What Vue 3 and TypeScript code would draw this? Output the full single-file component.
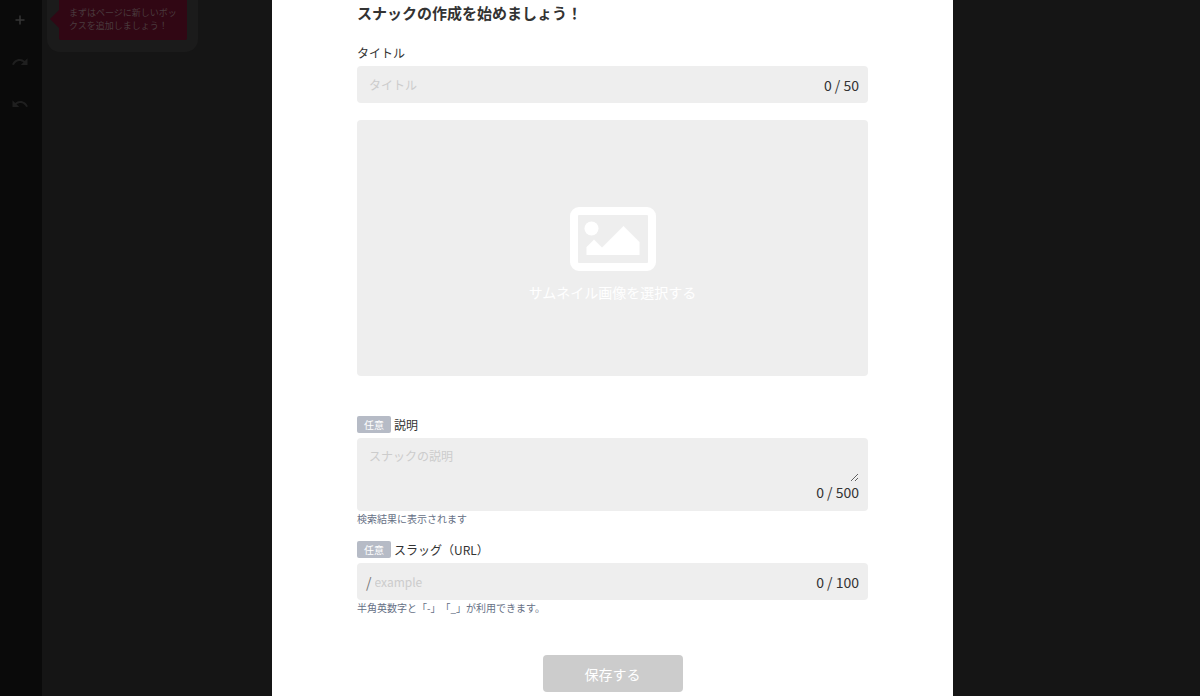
<script setup lang="ts">
import { ref } from 'vue'

const title = ref('')
const description = ref('')
const slug = ref('')
</script>

<template>
  <div class="app">
    <div class="editor">
      <nav class="toolbar">
        <button type="button" class="tool add" aria-label="追加">
          <svg viewBox="0 0 24 24"><path d="M12 6v12M6 12h12" fill="none" stroke="currentColor" stroke-width="2" /></svg>
        </button>
        <button type="button" class="tool" aria-label="やり直す">
          <svg viewBox="0 0 24 24"><path d="M18.400 10.600C16.550 8.990 14.150 8 11.500 8c-4.650 0-8.580 3.030-9.960 7.220L3.900 16c1.050-3.190 4.050-5.500 7.600-5.500 1.950 0 3.730.72 5.120 1.880L13 16h9V7l-3.600 3.600z" fill="currentColor" /></svg>
        </button>
        <button type="button" class="tool" aria-label="元に戻す">
          <svg viewBox="0 0 24 24"><path d="M12.500 8c-2.650 0-5.050.99-6.900 2.600L2 7v9h9l-3.620-3.620c1.390-1.160 3.160-1.880 5.120-1.880 3.540 0 6.550 2.310 7.600 5.500l2.370-.78C21.080 11.030 17.150 8 12.500 8z" fill="currentColor" /></svg>
        </button>
      </nav>
      <div class="canvas">
        <div class="guide">
          <p class="bubble">まずはページに新しいボッ<br />クスを追加しましょう！</p>
        </div>
      </div>
    </div>

    <div class="overlay">
      <form class="dialog" role="dialog" aria-labelledby="dialog-title" @submit.prevent>
        <h1 id="dialog-title">スナックの作成を始めましょう！</h1>

        <div class="label-row"><label for="title">タイトル</label></div>
        <div class="field">
          <input id="title" v-model="title" type="text" maxlength="50" placeholder="タイトル" />
          <span class="count">{{ title.length }} / 50</span>
        </div>

        <button type="button" class="thumbnail">
          <svg viewBox="0 0 86 64">
            <rect x="4" y="4" width="78" height="56" rx="5" fill="none" stroke="#fff" stroke-width="8" />
            <circle cx="21.500" cy="21.500" r="7" fill="#fff" />
            <path d="M16.500 48V40L24 32.500L32 40.500L53.500 19L69.500 35V48Z" fill="#fff" />
          </svg>
          <span>サムネイル画像を選択する</span>
        </button>

        <div class="label-row">
          <span class="badge">任意</span><label for="description">説明</label>
        </div>
        <div class="field multiline">
          <textarea id="description" v-model="description" maxlength="500" placeholder="スナックの説明"></textarea>
          <span class="count">{{ description.length }} / 500</span>
        </div>
        <p class="hint">検索結果に表示されます</p>

        <div class="label-row">
          <span class="badge">任意</span><label for="slug">スラッグ（URL）</label>
        </div>
        <div class="field slug">
          <span class="slash">/</span>
          <input id="slug" v-model="slug" type="text" maxlength="100" placeholder="example" />
          <span class="count">{{ slug.length }} / 100</span>
        </div>
        <p class="hint">半角英数字と「-」「_」が利用できます。</p>

        <button type="submit" class="save">保存する</button>
      </form>
    </div>
  </div>
</template>

<style>
body {
  margin: 0;
  background: #151515;
}
</style>

<style scoped>
.app {
  display: grid;
  height: 100vh;
  overflow: hidden;
  color: #333;
  font-family: "Noto Sans CJK JP", sans-serif;
  font-size: 14px;
  text-spacing-trim: space-all;
}

.app * {
  box-sizing: border-box;
}

button,
input,
textarea {
  margin: 0;
  padding: 0;
  border: 0;
  background: none;
  color: inherit;
  font: inherit;
}

.editor,
.overlay {
  grid-area: 1 / 1;
  min-height: 0;
}

.editor {
  display: flex;
  background: #151515;
}

.toolbar {
  display: flex;
  flex-direction: column;
  gap: 2px;
  width: 42px;
  background: #0a0a0a;
}

.tool {
  display: flex;
  align-items: center;
  justify-content: center;
  width: 40px;
  height: 40px;
  color: #1f1f1f;
}

.tool.add {
  color: #363636;
}

.tool svg {
  width: 18px;
  height: 18px;
}

.canvas {
  flex: 1;
  padding-left: 5px;
}

.guide {
  width: 151px;
  padding: 0 11px 12px 12px;
  border-radius: 0 0 13px 13px;
  background: #1b1b1b;
}

.bubble {
  position: relative;
  height: 40px;
  margin: 0;
  padding: 6px 10px;
  border-radius: 0 0 2px 2px;
  background: #310714;
  color: #4a3b3e;
  font-size: 9px;
  line-height: 13px;
  white-space: nowrap;
}

.bubble::before {
  content: "";
  position: absolute;
  top: 10px;
  left: -9px;
  border: solid transparent;
  border-width: 9px 9px 9px 0;
  border-right-color: #310714;
}

.overlay {
  display: flex;
  justify-content: center;
  padding-left: 25px;
}

.dialog {
  width: 681px;
  max-width: 100%;
  padding: 0 85px;
  background: #fff;
}

h1 {
  margin: 0 0 15px;
  font-size: 15px;
  font-weight: 700;
  line-height: 26px;
}

.label-row {
  display: flex;
  align-items: center;
  gap: 3px;
  height: 23px;
  margin-bottom: 2px;
  font-size: 12px;
}

.badge {
  width: 34px;
  border-radius: 2px;
  background: #b6bbc6;
  color: #fff;
  font-size: 10px;
  line-height: 17px;
  text-align: center;
}

.field {
  display: flex;
  align-items: center;
  height: 37px;
  padding: 0 9px 0 12px;
  border-radius: 4px;
  background: #eee;
}

.field input,
.field textarea {
  flex: 1;
  min-width: 0;
  font-size: 12px;
  outline: none;
}

.field ::placeholder {
  color: #ccc;
  opacity: 1;
}

.multiline {
  flex-direction: column;
  align-items: stretch;
  height: 73px;
  padding-top: 9px;
  padding-bottom: 9px;
}

.field textarea {
  line-height: 18px;
  resize: vertical;
}

.count {
  line-height: 20px;
  text-align: right;
}

.slug {
  gap: 3px;
  padding-left: 9px;
}

.slash {
  color: #777;
}

.thumbnail {
  display: flex;
  flex-direction: column;
  align-items: center;
  justify-content: center;
  gap: 11px;
  width: 100%;
  height: 256px;
  margin: 17px 0 37px;
  padding-top: 12px;
  border-radius: 4px;
  background: #eee;
  color: #fff;
  line-height: 20px;
}

.thumbnail svg {
  width: 86px;
  height: 64px;
}

.hint {
  margin: 0 0 12px;
  color: #667085;
  font-size: 10px;
  line-height: 15px;
}

.save {
  display: block;
  width: 140px;
  height: 37px;
  margin: 40px auto 0;
  border-radius: 4px;
  background: #ccc;
  color: #fff;
}
</style>
